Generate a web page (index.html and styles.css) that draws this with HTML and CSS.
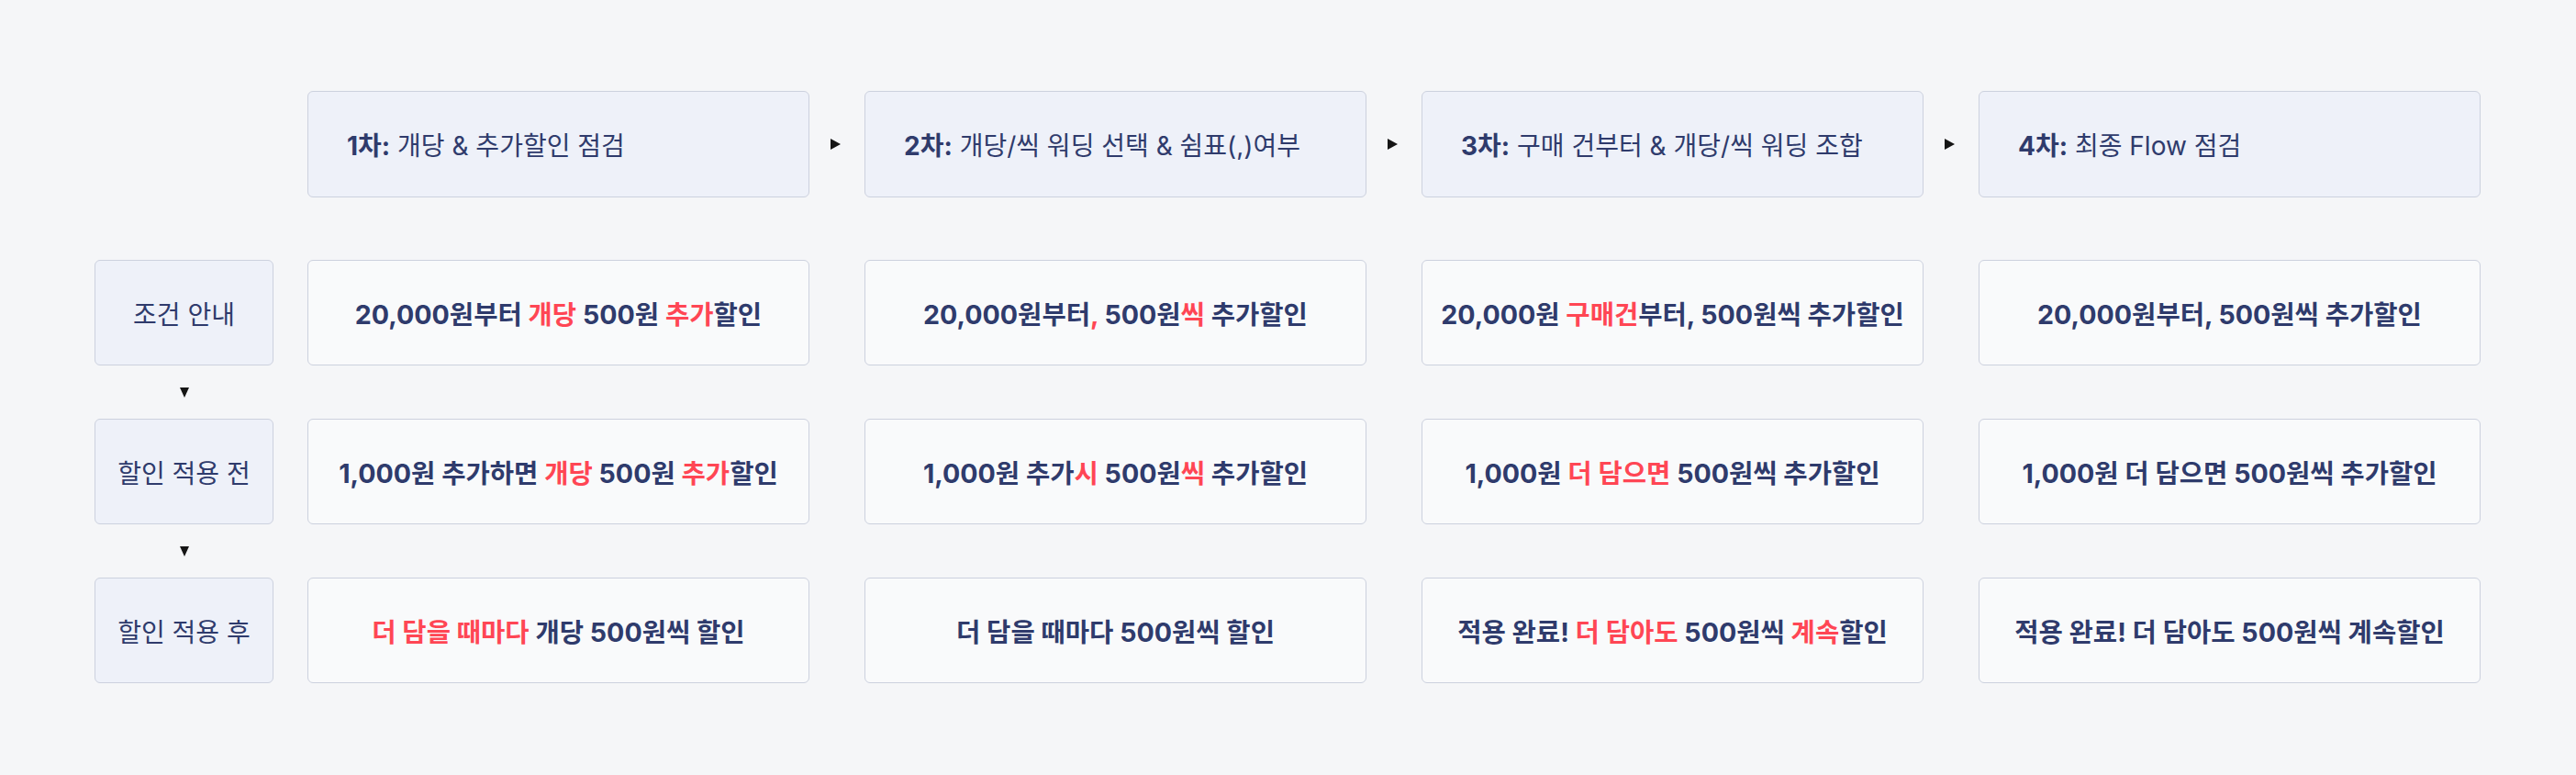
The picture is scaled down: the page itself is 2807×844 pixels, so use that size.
FILE: index.html
```html
<!DOCTYPE html>
<html lang="ko">
<head>
<meta charset="utf-8">
<title>할인 문구 점검 Flow</title>
<link rel="stylesheet" href="styles.css">
</head>
<body>
<div class="board">
  <div class="row head-row">
    <div class="label-spacer"></div>
    <div class="cells">
      <div class="cell head"><span><b>1차:</b> 개당 &amp; 추가할인 점검</span></div>
      <div class="hsep"><i class="tri-right"></i></div>
      <div class="cell head"><span><b>2차:</b> 개당/씩 워딩 선택 &amp; 쉼표(,)여부</span></div>
      <div class="hsep"><i class="tri-right"></i></div>
      <div class="cell head"><span><b>3차:</b> 구매 건부터 &amp; 개당/씩 워딩 조합</span></div>
      <div class="hsep"><i class="tri-right"></i></div>
      <div class="cell head"><span><b>4차:</b> 최종 Flow 점검</span></div>
    </div>
  </div>

  <div class="row">
    <div class="label">조건 안내</div>
    <div class="cells gapped">
      <div class="cell body"><span>20,000원부터 <em>개당</em> 500원 <em>추가</em>할인</span></div>
      <div class="cell body"><span>20,000원부터<em>,</em> 500원<em>씩</em> 추가할인</span></div>
      <div class="cell body"><span>20,000원 <em>구매건</em>부터, 500원씩 추가할인</span></div>
      <div class="cell body"><span>20,000원부터, 500원씩 추가할인</span></div>
    </div>
  </div>
  <div class="vsep"><i class="tri-down"></i></div>

  <div class="row">
    <div class="label">할인 적용 전</div>
    <div class="cells gapped">
      <div class="cell body"><span>1,000원 추가하면 <em>개당</em> 500원 <em>추가</em>할인</span></div>
      <div class="cell body"><span>1,000원 추가<em>시</em> 500원<em>씩</em> 추가할인</span></div>
      <div class="cell body"><span>1,000원 <em>더 담으면</em> 500원씩 추가할인</span></div>
      <div class="cell body"><span>1,000원 더 담으면 500원씩 추가할인</span></div>
    </div>
  </div>
  <div class="vsep"><i class="tri-down"></i></div>

  <div class="row">
    <div class="label">할인 적용 후</div>
    <div class="cells gapped">
      <div class="cell body"><span><em>더 담을 때마다</em> 개당 500원씩 할인</span></div>
      <div class="cell body"><span>더 담을 때마다 500원씩 할인</span></div>
      <div class="cell body"><span>적용 완료! <em>더 담아도</em> 500원씩 <em>계속</em>할인</span></div>
      <div class="cell body"><span>적용 완료! 더 담아도 500원씩 계속할인</span></div>
    </div>
  </div>
</div>
</body>
</html>
```

FILE: styles.css
```css
* { box-sizing: border-box; }
html, body {
  margin: 0;
  padding: 0;
  background: #f5f6f8;
}
body {
  font-family: Inter, "Noto Sans CJK KR", sans-serif;
  color: #2f3b6c;
  width: 2807px;
  height: 844px;
  overflow: hidden;
}
.board {
  display: flex;
  flex-direction: column;
  padding: 99px 0 0 103px;
}
.row {
  display: flex;
  height: 115px;
}
.head-row {
  height: 116px;
  margin-bottom: 68px;
}
.label-spacer,
.label {
  width: 195px;
  margin-right: 37px;
  flex: none;
}
.label {
  display: flex;
  align-items: center;
  justify-content: center;
  background: #eef1f9;
  border: 1px solid #ccd1de;
  border-radius: 6px;
  font-size: 28px;
  font-weight: 400;
  white-space: nowrap;
}
.cells {
  display: flex;
}
.cells.gapped {
  gap: 60px;
}
.cell {
  width: 547px;
  flex: none;
  border: 1px solid #ccd1de;
  border-radius: 6px;
  display: flex;
  align-items: center;
  white-space: nowrap;
}
.cell.head {
  background: #eef1f9;
  padding-left: 42px;
  font-size: 28px;
  font-weight: 400;
}
.cell.head b {
  font-weight: 700;
}
.cell.body {
  background: #f9fafb;
  justify-content: center;
  font-size: 28.6px;
  font-weight: 700;
}
em {
  font-style: normal;
  color: #ff4654;
}
.hsep {
  width: 60px;
  flex: none;
  display: flex;
  align-items: center;
  justify-content: center;
}
.tri-right {
  display: block;
  width: 0;
  height: 0;
  border-top: 6px solid transparent;
  border-bottom: 6px solid transparent;
  border-left: 11px solid #151515;
  margin-left: -4px;
}
.vsep {
  width: 195px;
  height: 58px;
  display: flex;
  align-items: center;
  justify-content: center;
}
.tri-down {
  display: block;
  width: 0;
  height: 0;
  border-left: 5.5px solid transparent;
  border-right: 5.5px solid transparent;
  border-top: 11px solid #151515;
}
```
